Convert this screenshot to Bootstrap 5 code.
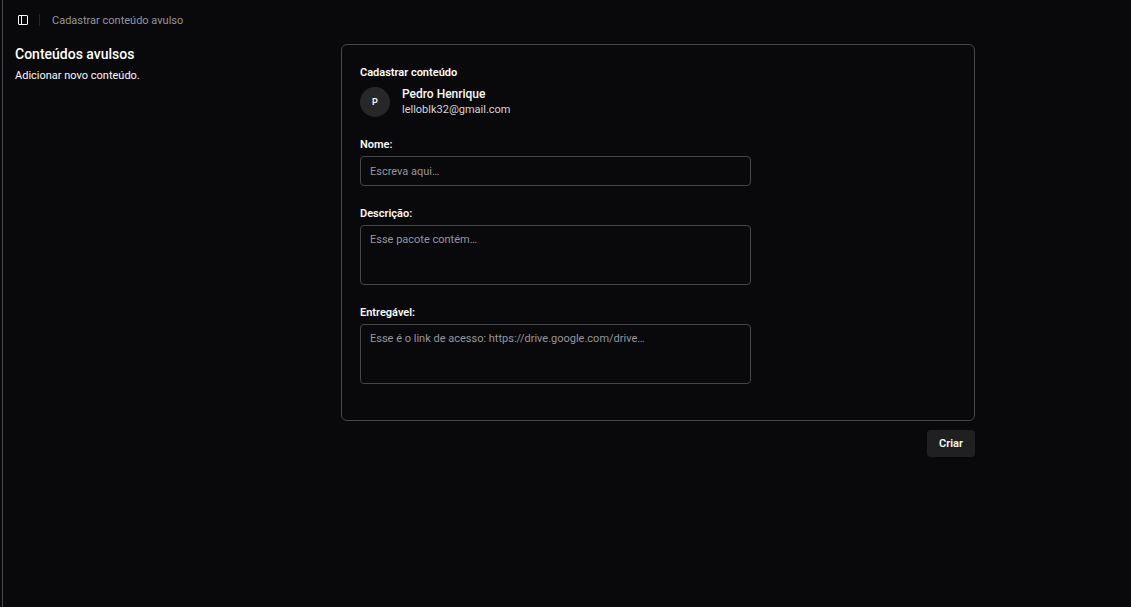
<!DOCTYPE html>
<html lang="pt-BR" data-bs-theme="dark">
<head>
<meta charset="utf-8">
<meta name="viewport" content="width=device-width, initial-scale=1">
<title>Cadastrar conteúdo avulso</title>
<link href="https://cdn.jsdelivr.net/npm/bootstrap@5.3.0/dist/css/bootstrap.min.css" rel="stylesheet">
<style>
  body { background: #09090b; color: #fafafa; font-family: Roboto, "Liberation Sans", sans-serif; font-size: 11px; line-height: 16px; }
  .app-shell { margin-left: 2px; border-left: 1px solid #45454a; }
  .topbar { height: 40px; padding: 0 12px; }
  .toggle-btn { width: 16px; height: 16px; color: #fafafa; line-height: 0; }
  .divider { width: 1px; height: 12px; background: #27272a; margin: 0 12px 0 8px; }
  .crumb-nav { padding-top: 2px; }
  .crumb-link { color: #96969c; }
  .page-body { max-width: 984px; padding: 4px 12px; }
  .grid-row { --bs-gutter-x: 18px; }
  .page-title { font-size: 14px; line-height: 20px; font-weight: 500; }
  .page-text { line-height: 24px; }
  .panel { --bs-card-bg: transparent; --bs-card-border-color: #45454a; --bs-card-border-radius: 6px; --bs-card-color: #fafafa; }
  .panel .card-body { padding: 20px 18px 36px; }
  .panel-title, .field-label { font-size: 11px; line-height: 16px; font-weight: 600; }
  .panel-title { margin-bottom: 6px; }
  .avatar { width: 30px; height: 30px; background: #27272a; font-size: 9px; font-weight: 600; }
  .user-name { font-size: 12px; font-weight: 500; line-height: 15px; }
  .user-mail { line-height: 15px; color: #d4d4d8; }
  .field-label { margin-bottom: 3px; }
  .field { background: transparent !important; border-color: #45454a; border-radius: 4px; color: #fafafa; font-size: 11px; line-height: 16px; padding: 6px 9px; }
  .field::placeholder { color: #96969c; }
  input.field { height: 30px; }
  textarea.field { height: 60px; min-height: 60px; }
  .field::-webkit-resizer { background: transparent; }
  .fields { gap: 20px; margin-top: 20px; }
  .actions { padding-top: 9px; }
  .btn-create { --bs-btn-bg: #202020; --bs-btn-color: #fafafa; --bs-btn-hover-bg: #2a2a2a; --bs-btn-hover-color: #fafafa; border: 0; border-radius: 4px; font-size: 11px; font-weight: 600; line-height: 17px; padding: 5px 12px; }
</style>
</head>
<body>
<div class="app-shell min-vh-100">
  <header class="topbar d-flex align-items-center">
    <button type="button" class="toggle-btn btn border-0 p-0" aria-label="Alternar menu lateral">
      <svg width="16" height="16" viewBox="0 0 16 16" fill="none" stroke="currentColor" aria-hidden="true"><rect x="3.5" y="3.5" width="9" height="9" rx="0.5"/><path d="M6.500 3.500v9"/></svg>
    </button>
    <div class="divider"></div>
    <nav class="crumb-nav" aria-label="Localização"><a href="#" class="crumb-link text-decoration-none">Cadastrar conteúdo avulso</a></nav>
  </header>
  <main class="page-body">
    <form class="row grid-row">
      <div class="col-4">
        <h1 class="page-title mb-0">Conteúdos avulsos</h1>
        <p class="page-text mb-0">Adicionar novo conteúdo.</p>
      </div>
      <div class="col-8">
        <section class="card panel">
          <div class="card-body">
            <h2 class="panel-title">Cadastrar conteúdo</h2>
            <div class="d-flex align-items-center">
              <div class="avatar rounded-circle d-flex align-items-center justify-content-center me-2">P</div>
              <div class="ms-1">
                <div class="user-name">Pedro Henrique</div>
                <div class="user-mail">lelloblk32@gmail.com</div>
              </div>
            </div>
            <div class="row grid-row">
              <div class="col-8 d-flex flex-column fields">
                <div>
                  <label for="nome" class="field-label d-block">Nome:</label>
                  <input id="nome" type="text" class="form-control field" placeholder="Escreva aqui…">
                </div>
                <div>
                  <label for="descricao" class="field-label d-block">Descrição:</label>
                  <textarea id="descricao" class="form-control field" placeholder="Esse pacote contém…"></textarea>
                </div>
                <div>
                  <label for="entregavel" class="field-label d-block">Entregável:</label>
                  <textarea id="entregavel" class="form-control field" placeholder="Esse é o link de acesso: https://drive.google.com/drive…"></textarea>
                </div>
              </div>
            </div>
          </div>
        </section>
        <div class="actions d-flex justify-content-end">
          <button type="submit" class="btn btn-create">Criar</button>
        </div>
      </div>
    </form>
  </main>
</div>
<script src="https://cdn.jsdelivr.net/npm/bootstrap@5.3.0/dist/js/bootstrap.bundle.min.js"></script>
</body>
</html>
